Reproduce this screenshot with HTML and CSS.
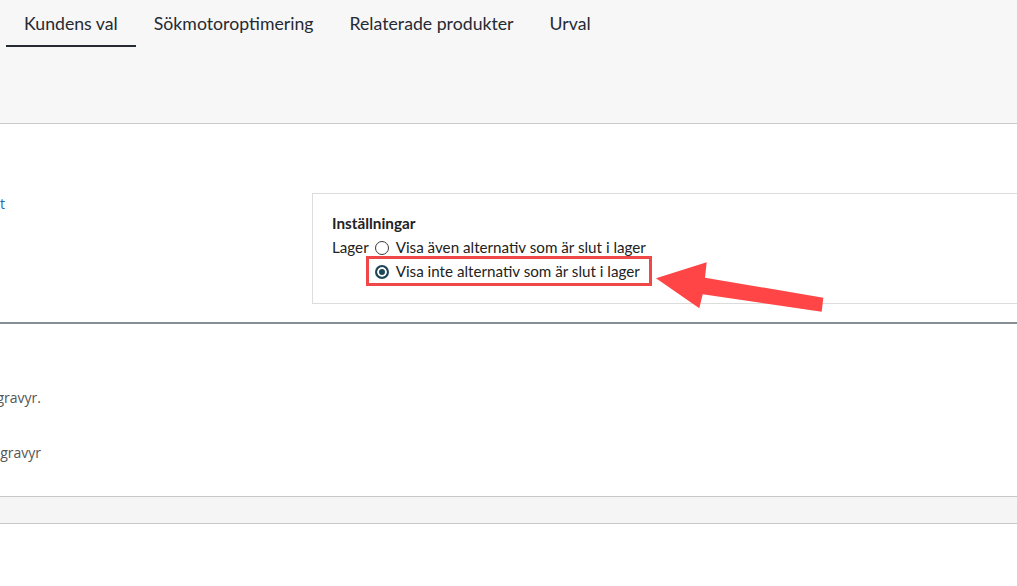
FILE: index.html
```html
<!DOCTYPE html>
<html lang="sv">
<head>
    <meta charset="UTF-8">
    <meta name="viewport" content="width=device-width, initial-scale=1.0">
    <title>Produkt - Kundens val</title>
    <link rel="stylesheet" href="styles.css">
</head>
<body>
    <div class="header">
        <div class="tabs">
            <a class="tab active">Kundens val</a>
            <a class="tab">Sökmotoroptimering</a>
            <a class="tab">Relaterade produkter</a>
            <a class="tab">Urval</a>
        </div>
    </div>

    <div class="panel">
        <div class="panel-left">
            <div class="cut-right cut-link">
                <a class="link">t</a>
            </div>
        </div>
        <div class="settings">
            <div class="settings-title">Inställningar</div>
            <div class="settings-row">
                <span class="settings-label">Lager</span>
                <div class="options">
                    <label class="option">
                        <span class="radio"></span>
                        Visa även alternativ som är slut i lager
                    </label>
                    <label class="option highlight">
                        <span class="radio checked"></span>
                        Visa inte alternativ som är slut i lager
                    </label>
                </div>
            </div>
        </div>

        <!-- annotation arrow -->
        <svg class="arrow" width="170" height="52" viewBox="655 261 170 52">
            <polygon points="656,278.3 706.7,262.3 705,277.7 823.3,297.7 821.7,311.7 702.7,294.3 699.3,308.3" fill="#ff4545"/>
        </svg>
    </div>

    <div class="section">
        <div class="cut-right cut-text first">gravyr.</div>
        <div class="cut-right cut-text">gravyr</div>
    </div>

    <div class="footer-band"></div>
</body>
</html>
```

FILE: styles.css
```css
body {
    margin: 0;
    font-family: Lato, "Open Sans", sans-serif;
    color: #222;
    background-color: white;
    overflow-x: hidden;
}
.header {
    background-color: #f7f7f7;
    height: 123px;
    border-bottom: 1px solid #cacaca;
}
.tabs {
    display: flex;
    padding-left: 6px;
}
.tab {
    font-size: 17.7px;
    line-height: 20px;
    padding: 14px 18px 11px;
    border-bottom: 2px solid transparent;
    color: #262a33;
    cursor: pointer;
}
.tab.active {
    border-bottom-color: #262a33;
}
.panel {
    position: relative;
    display: flex;
    height: 200px;
    padding-top: 69px;
    box-sizing: border-box;
    border-bottom: 2px solid #878e96;
}
.panel-left {
    width: 312px;
    flex-shrink: 0;
}
.cut-right {
    display: flex;
    justify-content: flex-end;
    white-space: nowrap;
}
.cut-link {
    width: 5px;
    padding-top: 1px;
}
.link {
    font-family: "Open Sans", sans-serif;
    font-size: 14px;
    line-height: 20px;
    color: #1b6bb3;
}
.settings {
    flex: 1;
    margin-right: -20px;
    height: 111px;
    box-sizing: border-box;
    border: 1px solid #dcdcdc;
    padding: 17px 19px 0;
    font-size: 15.2px;
    line-height: 24px;
}
.settings-title {
    font-weight: bold;
    font-size: 15.3px;
}
.settings-row {
    display: flex;
}
.settings-label {
    margin-right: 6px;
}
.options {
    display: flex;
    flex-direction: column;
}
.option {
    display: flex;
    align-items: center;
    gap: 7px;
    cursor: pointer;
}
.radio {
    width: 12px;
    height: 12px;
    border: 1px solid #3a3a3a;
    border-radius: 50%;
    background-color: white;
    margin-top: 1px;
}
.radio.checked {
    width: 10px;
    height: 10px;
    border: 2px solid #1d4759;
    background-color: #1d4759;
    box-shadow: inset 0 0 0 2px white;
}
.highlight {
    padding: 0 3px 0 6px;
    margin-left: -6px;
    margin-right: -3px;
    outline: 3px solid #f04848;
    outline-offset: 0;
}
.arrow {
    position: absolute;
    left: 655px;
    top: 137px;
}
.section {
    height: 173px;
    padding-top: 64px;
    box-sizing: border-box;
    border-bottom: 1px solid #c8c8c8;
}
.cut-text {
    width: 41px;
    font-family: "Open Sans", sans-serif;
    font-size: 14px;
    line-height: 20px;
    color: #555;
}
.cut-text.first {
    margin-bottom: 35px;
}
.footer-band {
    height: 27px;
    box-sizing: border-box;
    background-color: #f5f5f5;
    border-bottom: 1px solid #c8c8c8;
}
```
